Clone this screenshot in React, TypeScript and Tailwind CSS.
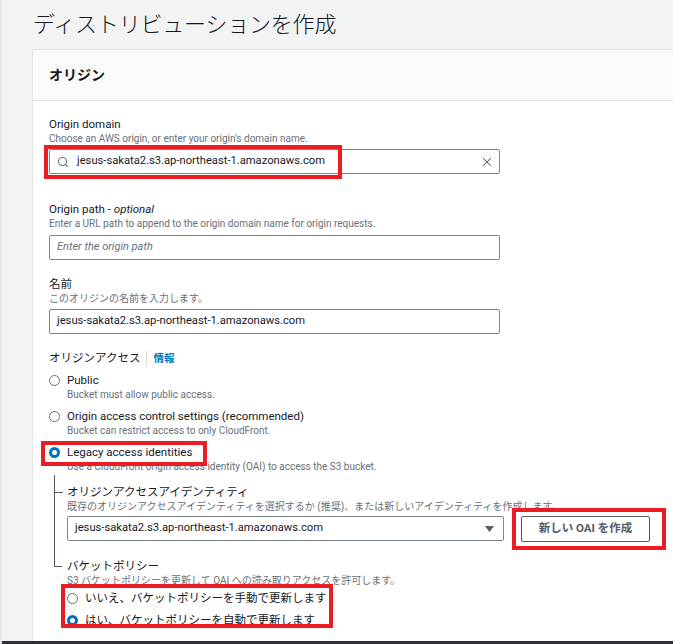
import { Search, X } from 'lucide-react';

const font = 'font-["Roboto","Noto_Sans_CJK_JP",sans-serif]';

function Label({ children }: { children: React.ReactNode }) {
    return <div className="text-[11.5px] leading-[15px] text-[#16191f]">{children}</div>;
}

function Desc({ children }: { children: React.ReactNode }) {
    return <div className="text-[10px] leading-[13px] text-[#687078]">{children}</div>;
}

function Radio({ checked }: { checked?: boolean }) {
    return checked ? (
        <span className="w-[11px] h-[11px] rounded-full border-[3.5px] border-[#0073bb] bg-white shrink-0" />
    ) : (
        <span className="w-[11px] h-[11px] rounded-full border border-[#687078] bg-white shrink-0" />
    );
}

function RadioOption({ label, desc, checked }: { label: string; desc: string; checked?: boolean }) {
    return (
        <div>
            <div className="flex items-center gap-[7px]">
                <Radio checked={checked} />
                <Label>{label}</Label>
            </div>
            <div className="pl-[18px]">
                <Desc>{desc}</Desc>
            </div>
        </div>
    );
}

const domain = 'jesus-sakata2.s3.ap-northeast-1.amazonaws.com';

export default function App() {
    return (
        <div className={`${font} relative h-[644px] w-[673px] overflow-hidden bg-[#f2f3f3] border-l-2 border-[#e6e8e8] flex flex-col`}>
            {/* Page title */}
            <h1 className="pl-[31px] pt-[9px] h-[49px] text-[22px] leading-[32px] font-light text-[#16191f] tracking-[-0.2px]">
                ディストリビューションを作成
            </h1>

            {/* Card */}
            <div className="ml-[30px] w-[680px] flex-1 bg-white border-l border-t border-[#e3e6e6] overflow-hidden">
                <div className="h-[51px] bg-[#fafafa] border-b border-[#e6e8e8] pl-[16px] flex items-center">
                    <h2 className="text-[14px] font-bold text-[#16191f]">オリジン</h2>
                </div>

                <div className="pl-[16px] pt-[16px]">
                    {/* Origin domain */}
                    <Label>Origin domain</Label>
                    <Desc>Choose an AWS origin, or enter your origin's domain name.</Desc>
                    <div className="mt-[4px] w-[451px] h-[25px] border border-[#7d8791] rounded-[2px] flex items-center pl-[7px] pr-[5px] gap-[8px]">
                        <Search size={12} strokeWidth={2.2} className="text-[#687078] shrink-0" />
                        <span className="flex-1 text-[11.2px] text-[#16191f]">{domain}</span>
                        <X size={14} strokeWidth={1.8} className="text-[#545b64] shrink-0" />
                    </div>

                    {/* Origin path */}
                    <div className="mt-[28px]">
                        <Label>
                            Origin path - <i>optional</i>
                        </Label>
                        <Desc>Enter a URL path to append to the origin domain name for origin requests.</Desc>
                        <div className="mt-[5px] w-[451px] h-[25px] border border-[#7d8791] rounded-[2px] flex items-center pl-[7px]">
                            <span className="text-[11px] italic text-[#687078]">Enter the origin path</span>
                        </div>
                    </div>

                    {/* Name */}
                    <div className="mt-[17px]">
                        <Label>名前</Label>
                        <Desc>このオリジンの名前を入力します。</Desc>
                        <div className="mt-[4px] w-[451px] h-[25px] border border-[#7d8791] rounded-[2px] flex items-center pl-[7px]">
                            <span className="text-[11.2px] text-[#16191f]">{domain}</span>
                        </div>
                    </div>

                    {/* Origin access */}
                    <div className="mt-[17px] flex items-center">
                        <Label>オリジンアクセス</Label>
                        <span className="mx-[6px] w-px h-[15px] bg-[#d5dbdb]" />
                        <span className="text-[10.5px] font-bold text-[#0073bb]">情報</span>
                    </div>

                    <div className="mt-[6px] flex flex-col gap-[8px]">
                        <RadioOption label="Public" desc="Bucket must allow public access." />
                        <RadioOption
                            label="Origin access control settings (recommended)"
                            desc="Bucket can restrict access to only CloudFront."
                        />
                        <RadioOption
                            checked
                            label="Legacy access identities"
                            desc="Use a CloudFront origin access identity (OAI) to access the S3 bucket."
                        />
                    </div>

                    {/* Nested settings */}
                    <div className="ml-[5px] mt-[2px]">
                        <div className="flex">
                            <div className="w-[13px] shrink-0 border-l border-[#545b64]">
                                <div className="mt-[17px] h-px w-[8px] bg-[#545b64]" />
                            </div>
                            <div className="pt-[10px] pb-[17px]">
                                <Label>オリジンアクセスアイデンティティ</Label>
                                <Desc>既存のオリジンアクセスアイデンティティを選択するか (推奨)、または新しいアイデンティティを作成します。</Desc>
                                <div className="mt-[3px] flex items-center gap-[17px]">
                                    <div className="w-[437px] h-[25px] border border-[#7d8791] rounded-[2px] flex items-center pl-[7px] pr-[9px]">
                                        <span className="flex-1 text-[11.2px] text-[#16191f]">{domain}</span>
                                        <svg width="9" height="6" viewBox="0 0 9 6">
                                            <path d="M0 0 H9 L4.5 6 Z" fill="#545b64" />
                                        </svg>
                                    </div>
                                    <button className="w-[129px] h-[26px] border border-[#545b64] rounded-[2px] bg-white text-[11.5px] font-bold text-[#545b64]">
                                        新しい OAI を作成
                                    </button>
                                </div>
                            </div>
                        </div>

                        <div className="flex">
                            <div className="w-[13px] shrink-0">
                                <div className="h-[8px] w-[8px] border-l border-b border-[#545b64]" />
                            </div>
                            <div>
                                <Label>バケットポリシー</Label>
                                <Desc>S3 バケットポリシーを更新して OAI への読み取りアクセスを許可します。</Desc>
                                <div className="mt-[4px] flex flex-col gap-[7px]">
                                    <div className="flex items-center gap-[7px]">
                                        <Radio />
                                        <Label>いいえ、バケットポリシーを手動で更新します</Label>
                                    </div>
                                    <div className="flex items-center gap-[7px]">
                                        <Radio checked />
                                        <Label>はい、バケットポリシーを自動で更新します</Label>
                                    </div>
                                </div>
                            </div>
                        </div>
                    </div>
                </div>
            </div>

            <div className="h-[3px] bg-[#2d3137]" />

            {/* Red annotation boxes */}
            <div className="absolute left-[42px] top-[145px] w-[298px] h-[34px] border-[4px] border-[#ec1c24]" />
            <div className="absolute left-[39px] top-[441px] w-[166px] h-[25px] border-[4px] border-[#ec1c24]" />
            <div className="absolute left-[510px] top-[508px] w-[154px] h-[42px] border-[4px] border-[#ec1c24]" />
            <div className="absolute left-[59px] top-[584px] w-[272px] h-[44px] border-[4px] border-[#ec1c24]" />
        </div>
    );
}
